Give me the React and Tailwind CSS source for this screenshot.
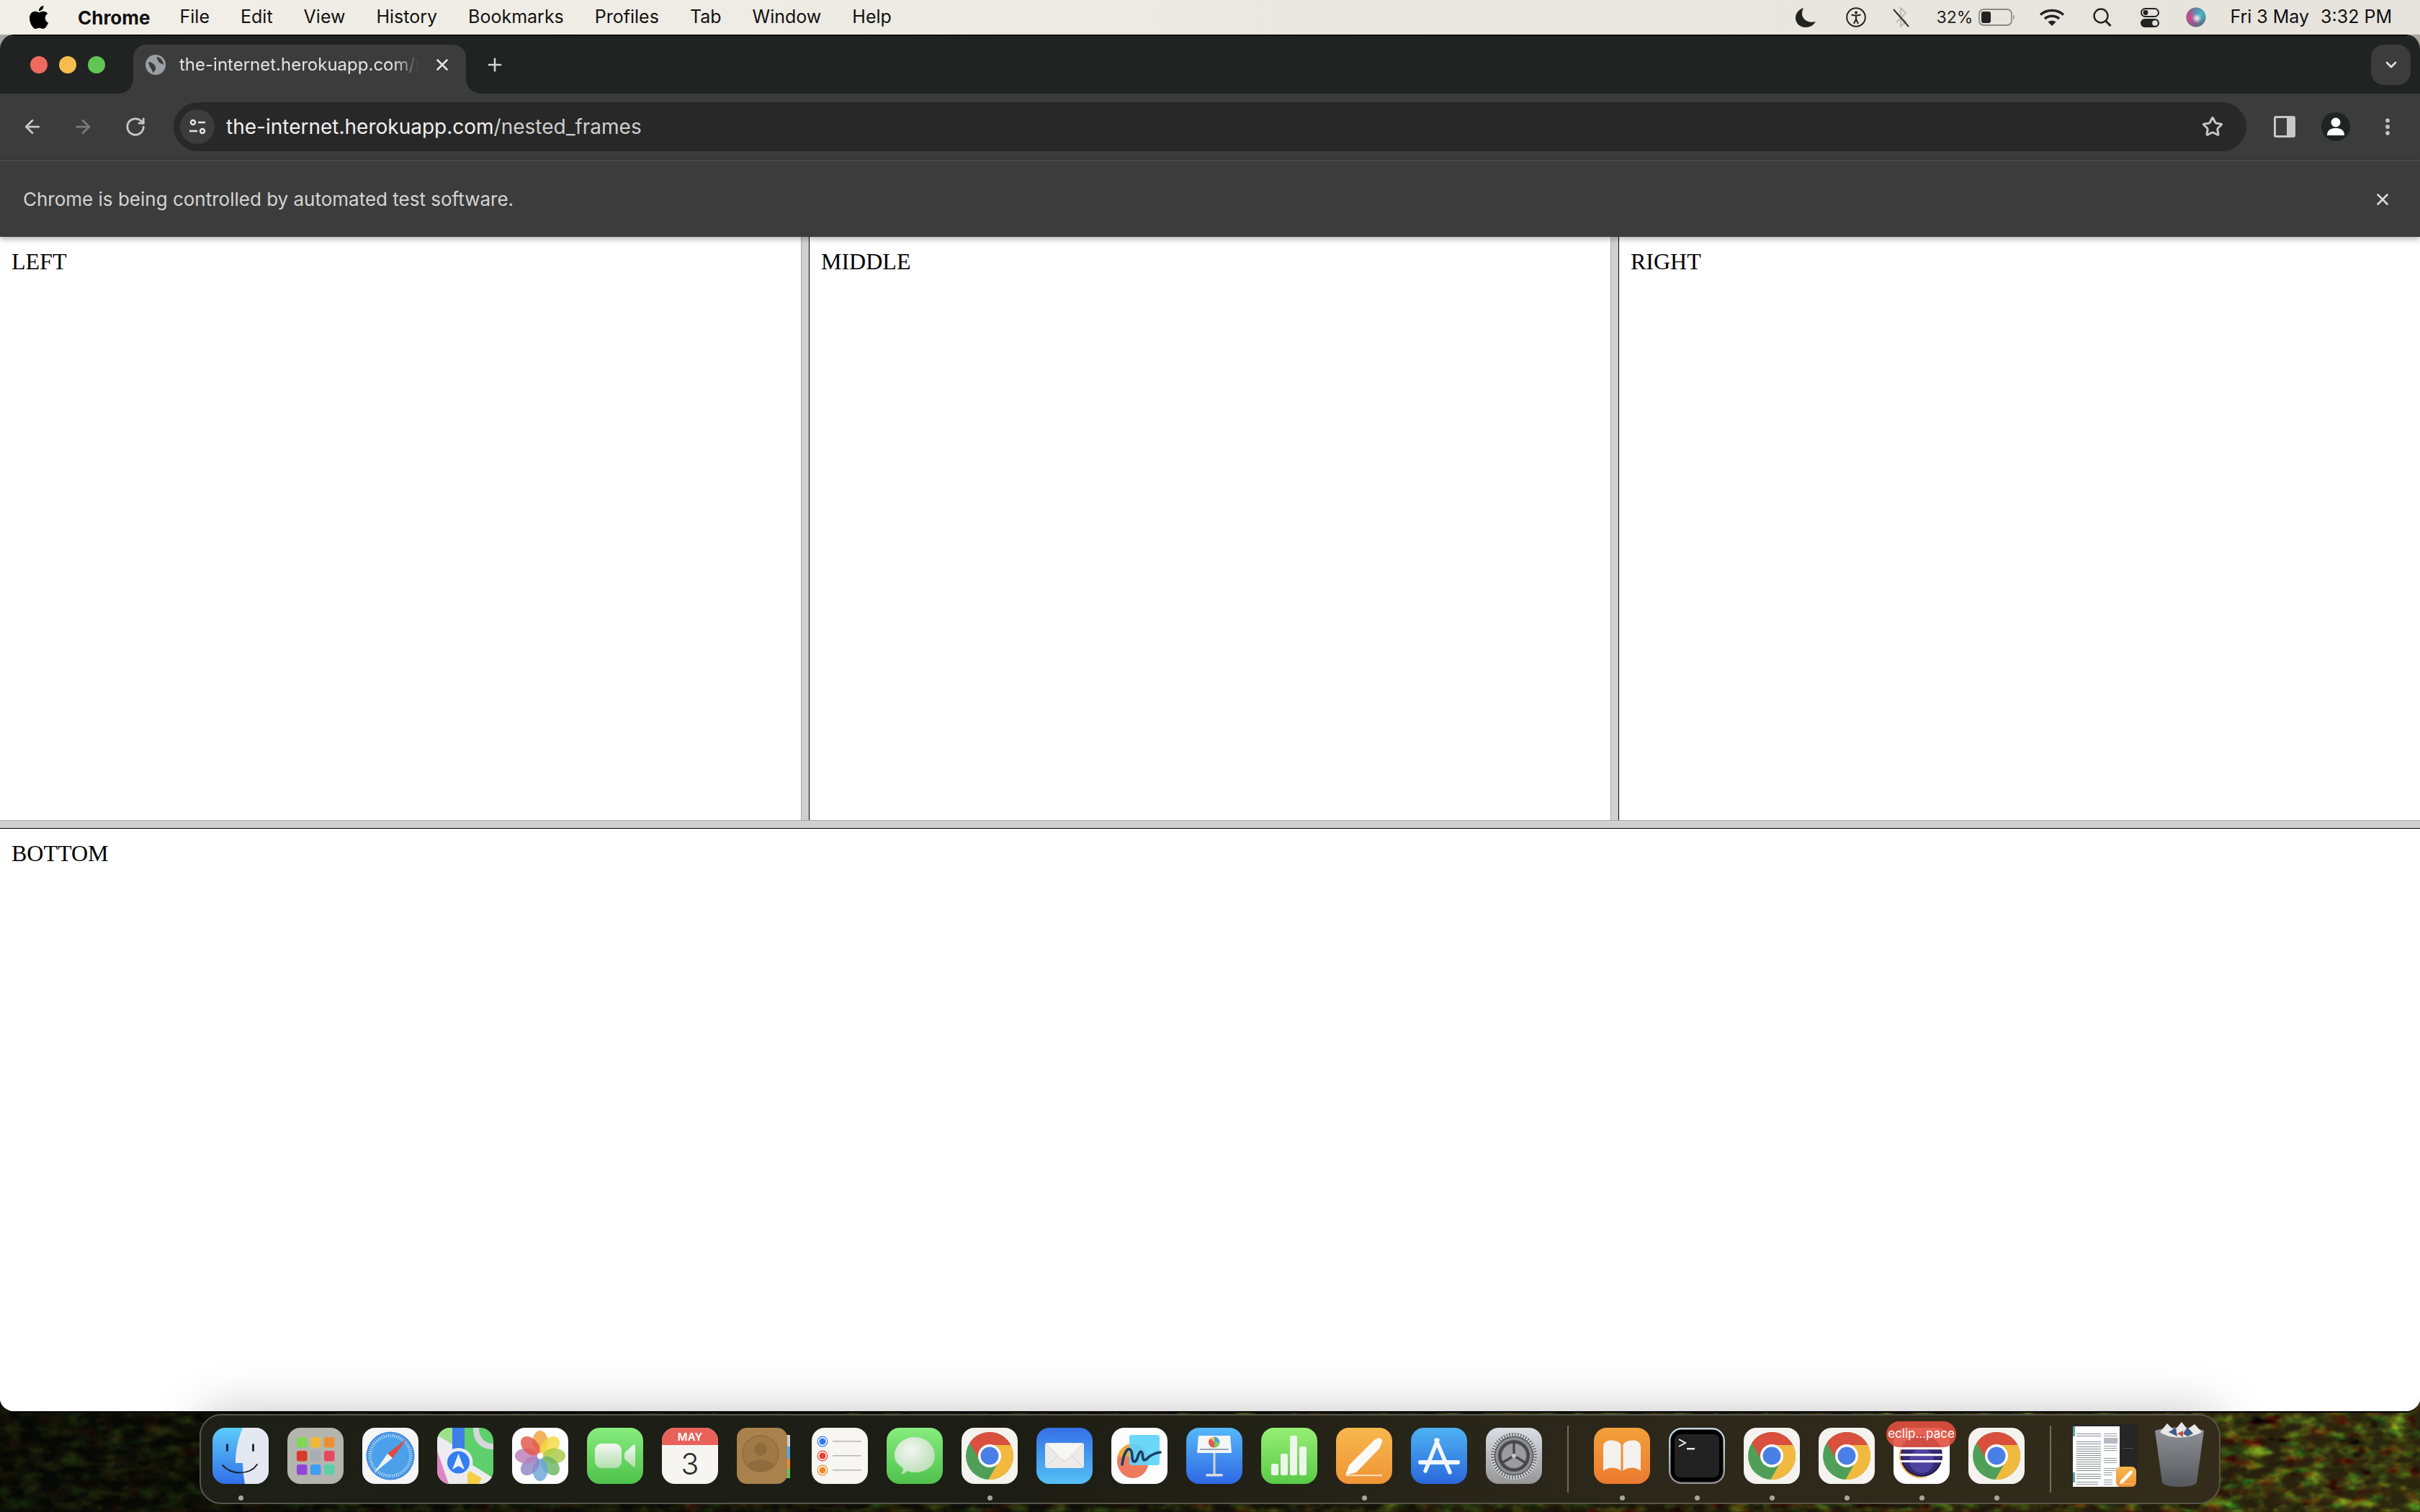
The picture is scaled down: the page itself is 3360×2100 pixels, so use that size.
import React from 'react';
import { ArrowLeft, ArrowRight, ChevronDown, EllipsisVertical, Plus, RotateCw, Star, X } from 'lucide-react';

const ui = 'font-["Inter","Liberation_Sans",sans-serif]';

function Tile({ children }) {
    return <svg viewBox="0 0 78 78" className="w-[78px] h-[78px] overflow-visible block">{children}</svg>;
}

function Chrome() {
    return (
        <Tile>
            <rect width="78" height="78" rx="18" fill="#f4f3ef" />
            <circle cx="39" cy="39" r="33" fill="#4f9f58" />
            <path d="M39 24L68.4 24A33 33 0 0 0 11.3 21L26 46.5Z" fill="#d9503f" />
            <path d="M52 46.5L37.3 72A33 33 0 0 0 68.4 24L39 24Z" fill="#f2b93f" />
            <circle cx="39" cy="39" r="16" fill="#fff" />
            <circle cx="39" cy="39" r="12.5" fill="#4a7fe5" />
        </Tile>
    );
}

function Finder() {
    return (
        <Tile>
            <defs>
                <linearGradient id="finderBlue" x1="0" y1="0" x2="0" y2="1"><stop offset="0" stopColor="#5ccbfb" /><stop offset="1" stopColor="#3170e8" /></linearGradient>
            </defs>
            <rect width="78" height="78" rx="18" fill="url(#finderBlue)" />
            <path d="M42 0H60A18 18 0 0 1 78 18V60A18 18 0 0 1 60 78H45C43 66 42 58 42 49H32C32 30 36 14 42 0Z" fill="#e3e8f1" />
            <rect x="19" y="22" width="3" height="11" rx="1.5" fill="#1f2a44" />
            <rect x="55" y="22" width="3" height="11" rx="1.5" fill="#1f2a44" />
            <path d="M14 52C26 66 52 66 62 51" fill="none" stroke="#1b2130" strokeWidth="2" strokeLinecap="round" />
        </Tile>
    );
}

function Launchpad() {
    const colors = ['#7fd858', '#f0b93c', '#ec8f32', '#d83a2c', '#a9aeb2', '#e8485f', '#8f45d6', '#3f9cf5', '#5fcfa8'];
    return (
        <Tile>
            <rect width="78" height="78" rx="18" fill="#b5b5af" />
            {colors.map((c, i) => (
                <rect key={c} x={13 + (i % 3) * 19} y={13 + Math.floor(i / 3) * 19} width="14.5" height="14.5" rx="3" fill={c} />
            ))}
        </Tile>
    );
}

function Safari() {
    const ticks = Array.from({ length: 60 }, (_, i) => i * 6);
    return (
        <Tile>
            <rect width="78" height="78" rx="18" fill="#f5f5f5" />
            <circle cx="39" cy="39" r="33.5" fill="#3f8fe0" />
            <circle cx="39" cy="39" r="29" fill="#4ba0ea" />
            {ticks.map((a) => (
                <rect key={a} x="38.6" y="8" width="0.9" height="5" fill="#dcecf9" transform={`rotate(${a} 39 39)`} />
            ))}
            <path d="M62 15L35 36L42 42Z" fill="#e2483a" />
            <path d="M16 63L35 36L42 42Z" fill="#f2f2f2" />
        </Tile>
    );
}

function Maps() {
    return (
        <Tile>
            <clipPath id="mapsClip"><rect width="78" height="78" rx="18" /></clipPath>
            <g clipPath="url(#mapsClip)">
                <rect width="78" height="78" fill="#5fce6c" />
                <path d="M0 0H22V24L0 10Z" fill="#9be28a" />
                <path d="M0 10L32 30V78H14L0 50Z" fill="#ececf0" />
                <path d="M0 50L14 78H0Z" fill="#df86c4" />
                <path d="M0 32L16 78H0Z" fill="#df86c4" />
                <path d="M40 46L78 70V78H28V40Z" fill="#ececf0" />
                <path d="M42 78V58L62 70L58 78Z" fill="#f4cf46" />
                <rect x="21" y="0" width="17" height="42" fill="#3d7ee9" />
                <path d="M50 0C50 20 60 30 78 30V22C66 22 58 14 58 0Z" fill="#d6d6da" />
                <circle cx="29.5" cy="48" r="20" fill="#e8ecf3" />
                <circle cx="29.5" cy="48" r="15.5" fill="#337df0" />
                <path d="M29.5 36L38 58L29.5 53L21 58Z" fill="#e9f0fb" />
            </g>
        </Tile>
    );
}

function Photos() {
    const petals = ['#f0a238', '#f4d93f', '#a8cb44', '#6bb667', '#6aa6dc', '#8f84c6', '#bb7db8', '#e2574c'];
    return (
        <Tile>
            <rect width="78" height="78" rx="18" fill="#fdfdfd" />
            {petals.map((c, i) => (
                <ellipse key={c} cx="39" cy="19.5" rx="10.5" ry="15.5" fill={c} fillOpacity="0.82" transform={`rotate(${i * 45} 39 39)`} />
            ))}
            <circle cx="39" cy="39" r="1.6" fill="#fff" />
        </Tile>
    );
}

function FaceTime() {
    return (
        <Tile>
            <defs>
                <linearGradient id="ftGreen" x1="0" y1="0" x2="0" y2="1"><stop offset="0" stopColor="#86ec7e" /><stop offset="1" stopColor="#4fc24c" /></linearGradient>
                <linearGradient id="ftWhite" x1="0" y1="0" x2="0" y2="1"><stop offset="0" stopColor="#f4f7f2" /><stop offset="1" stopColor="#b3dfae" /></linearGradient>
            </defs>
            <rect width="78" height="78" rx="18" fill="url(#ftGreen)" />
            <rect x="11" y="22" width="37" height="34" rx="9" fill="url(#ftWhite)" />
            <path d="M52 35L64 24C66 23 67 24 67 26V52C67 54 66 55 64 54L52 43Z" fill="url(#ftWhite)" />
        </Tile>
    );
}

function Calendar() {
    return (
        <Tile>
            <clipPath id="calClip"><rect width="78" height="78" rx="18" /></clipPath>
            <g clipPath="url(#calClip)">
                <rect width="78" height="78" fill="#f6f5f2" />
                <rect width="78" height="24" fill="#e8625a" />
            </g>
            <text x="39" y="18" textAnchor="middle" fontFamily="Inter, sans-serif" fontWeight="600" fontSize="15" fill="#fff">MAY</text>
            <text x="39" y="65" textAnchor="middle" fontFamily="Inter, sans-serif" fontWeight="300" fontSize="41" fill="#2b2b2b">3</text>
        </Tile>
    );
}

function Contacts() {
    return (
        <Tile>
            <rect x="66" y="10" width="8" height="16" fill="#cfcfcf" />
            <rect x="66" y="26" width="8" height="17" fill="#55a7e8" />
            <rect x="66" y="43" width="8" height="14" fill="#ec8a2e" />
            <rect x="66" y="57" width="8" height="13" fill="#62c158" />
            <rect x="0" width="70" height="78" rx="14" fill="#a9814c" />
            <circle cx="33" cy="36" r="25" fill="#a07a46" stroke="#8f6c3d" strokeWidth="1.5" />
            <circle cx="33" cy="30" r="9" fill="#8f6c3d" />
            <path d="M14 53C18 42 48 42 52 53C46 64 20 64 14 53Z" fill="#8f6c3d" />
        </Tile>
    );
}

function Reminders() {
    const rows = [['#3478f0', 19], ['#e8402f', 39], ['#ee8a26', 59]];
    return (
        <Tile>
            <rect width="78" height="78" rx="18" fill="#f7f6f3" />
            {rows.map(([c, y]) => (
                <g key={c}>
                    <circle cx="15" cy={y} r="6.8" fill="#fff" stroke={c} strokeWidth="1.2" />
                    <circle cx="15" cy={y} r="4.6" fill={c} />
                    <rect x="29" y={y - 1} width="40" height="1.6" fill="#b8b8b8" />
                </g>
            ))}
        </Tile>
    );
}

function Messages() {
    return (
        <Tile>
            <defs>
                <linearGradient id="msgGreen" x1="0" y1="0" x2="0" y2="1"><stop offset="0" stopColor="#86ec7e" /><stop offset="1" stopColor="#4fc24c" /></linearGradient>
                <radialGradient id="msgWhite" cx="0.4" cy="0.35" r="0.75"><stop offset="0" stopColor="#f3f6f1" /><stop offset="1" stopColor="#b4dcb0" /></radialGradient>
            </defs>
            <rect width="78" height="78" rx="18" fill="url(#msgGreen)" />
            <path d="M39 13C55 13 67 25 67 39C67 53 55 62 39 62C35 62 31 61 29 60C26 63 22 65 20 64C22 62 23 59 23 56C15 51 11 46 11 39C11 25 23 13 39 13Z" fill="url(#msgWhite)" />
        </Tile>
    );
}

function Mail() {
    return (
        <Tile>
            <defs>
                <linearGradient id="mailBlue" x1="0" y1="0" x2="0" y2="1"><stop offset="0" stopColor="#3470e6" /><stop offset="1" stopColor="#55c0f7" /></linearGradient>
            </defs>
            <rect width="78" height="78" rx="18" fill="url(#mailBlue)" />
            <rect x="12" y="21" width="54" height="35" rx="3" fill="#ecebea" />
            <path d="M13 22L35 44C37 46 41 46 43 44L65 22" fill="#f6f6f5" stroke="#cfcfcf" strokeWidth="1" />
            <path d="M13 55L30 38M65 55L48 38" stroke="#cfcfcf" strokeWidth="1" />
        </Tile>
    );
}

function Freeform() {
    return (
        <Tile>
            <rect width="78" height="78" rx="18" fill="#fdfdfd" />
            <ellipse cx="30" cy="46" rx="22" ry="24" fill="#ee7a5e" />
            <path d="M8 46C8 32 18 24 28 22V40H10Z" fill="#f0a83c" />
            <rect x="25" y="10" width="42" height="42" rx="3" fill="#60d4f8" fillOpacity="0.92" />
            <path d="M15 51C17 36 22 28 26 30C31 33 27 47 32 47C37 47 37 33 41 33C45 33 42 45 46 45C50 45 52 36 68 34" fill="none" stroke="#173e66" strokeWidth="3.6" strokeLinecap="round" />
        </Tile>
    );
}

function Keynote() {
    return (
        <Tile>
            <defs>
                <linearGradient id="keyBlue" x1="0" y1="0" x2="0" y2="1"><stop offset="0" stopColor="#55b8f7" /><stop offset="1" stopColor="#3068e6" /></linearGradient>
            </defs>
            <rect width="78" height="78" rx="18" fill="url(#keyBlue)" />
            <path d="M17 11H61L63 35H15Z" fill="#f4f5f6" />
            <rect x="19" y="29" width="40" height="2" fill="#9aa7b5" />
            <circle cx="39" cy="20" r="7.5" fill="#e9c23e" />
            <path d="M39 20V12.5A7.5 7.5 0 0 1 46.5 20Z" fill="#4aa5e0" />
            <path d="M39 20L46.5 20A7.5 7.5 0 0 1 39 27.5Z" fill="#82c76a" />
            <path d="M39 20V27.5A7.5 7.5 0 0 1 33 15Z" fill="#e2574c" />
            <rect x="37.5" y="35" width="3" height="29" fill="#cfd4d9" />
            <rect x="27" y="64" width="24" height="3.5" rx="1.7" fill="#d9dde0" />
        </Tile>
    );
}

function Numbers() {
    return (
        <Tile>
            <defs>
                <linearGradient id="numGreen" x1="0" y1="0" x2="0" y2="1"><stop offset="0" stopColor="#96ee74" /><stop offset="1" stopColor="#5acb48" /></linearGradient>
            </defs>
            <rect width="78" height="78" rx="18" fill="url(#numGreen)" />
            <rect x="14" y="50" width="10" height="16" rx="2.5" fill="#eef5ea" />
            <rect x="27" y="36" width="10" height="30" rx="2.5" fill="#eef5ea" />
            <rect x="40" y="11" width="10" height="55" rx="2.5" fill="#eef5ea" />
            <rect x="53" y="26" width="10" height="40" rx="2.5" fill="#eef5ea" />
        </Tile>
    );
}

function Pages({ id = 'pagesOrange' }) {
    return (
        <>
            <defs>
                <linearGradient id={id} x1="0" y1="0" x2="0" y2="1"><stop offset="0" stopColor="#f6b84c" /><stop offset="1" stopColor="#f09436" /></linearGradient>
            </defs>
            <rect width="78" height="78" rx="18" fill={`url(#${id})`} />
            <path d="M62 15C66 17 63 24 59 30L28 62L13 66L18 52L50 20C54 16 59 13 62 15Z" fill="#fbfaf7" />
            <rect x="14" y="65" width="50" height="2.2" fill="#fbdcae" />
        </>
    );
}

function PagesIcon() {
    return <Tile><Pages /></Tile>;
}

function AppStore() {
    return (
        <Tile>
            <defs>
                <linearGradient id="asBlue" x1="0" y1="0" x2="0" y2="1"><stop offset="0" stopColor="#4eb1f3" /><stop offset="1" stopColor="#2a68dc" /></linearGradient>
            </defs>
            <rect width="78" height="78" rx="18" fill="url(#asBlue)" />
            <g stroke="#f1f6fc" strokeLinecap="round" fill="none">
                <path d="M37 17L20 60" strokeWidth="5.5" />
                <path d="M35 17L54 62" strokeWidth="5.5" />
                <path d="M13 48H65" strokeWidth="6" />
            </g>
        </Tile>
    );
}

function Settings() {
    const teeth = Array.from({ length: 48 }, (_, i) => i * 7.5);
    return (
        <Tile>
            <defs>
                <linearGradient id="setGray" x1="0" y1="0" x2="0" y2="1"><stop offset="0" stopColor="#d8dfe5" /><stop offset="1" stopColor="#969696" /></linearGradient>
            </defs>
            <rect width="78" height="78" rx="18" fill="url(#setGray)" />
            <circle cx="39" cy="39" r="32" fill="#3f3f41" />
            {teeth.map((a) => (
                <rect key={a} x="37.6" y="6" width="2.8" height="6" fill="#c8cdd1" transform={`rotate(${a} 39 39)`} />
            ))}
            <circle cx="39" cy="39" r="26" fill="#8f8f91" />
            <circle cx="39" cy="39" r="22" fill="#5c5c5e" />
            <circle cx="39" cy="39" r="17" fill="#9c9c9e" />
            <g stroke="#47474a" strokeWidth="3.2" fill="none">
                <circle cx="39" cy="39" r="20" />
                <path d="M39 39V19M39 39L22 49M39 39L56 49" />
            </g>
            <circle cx="39" cy="39" r="3" fill="#c9c9cb" />
        </Tile>
    );
}

function Books() {
    return (
        <Tile>
            <defs>
                <linearGradient id="bookOrange" x1="0" y1="0" x2="0" y2="1"><stop offset="0" stopColor="#f2a03a" /><stop offset="1" stopColor="#ec7a30" /></linearGradient>
            </defs>
            <rect width="78" height="78" rx="18" fill="url(#bookOrange)" />
            <path d="M37.5 24C36 19 29 17.5 23 17.5C17 17.5 13 21 13 27V60C19 54 32 54 37.5 60Z" fill="#f5f2ee" />
            <path d="M40.5 24C42 19 49 17.5 55 17.5C61 17.5 65 21 65 27V60C59 54 46 54 40.5 60Z" fill="#f5f2ee" />
        </Tile>
    );
}

function Terminal() {
    return (
        <Tile>
            <defs>
                <linearGradient id="termEdge" x1="0" y1="0" x2="0" y2="1"><stop offset="0" stopColor="#c9dce6" /><stop offset="1" stopColor="#8e8e8e" /></linearGradient>
            </defs>
            <rect width="78" height="78" rx="18" fill="url(#termEdge)" />
            <rect x="2.5" y="2.5" width="73" height="73" rx="15" fill="#000" />
            <rect x="8" y="9" width="62" height="60" rx="8" fill="#222" />
            <path d="M14 16L23 21L14 26" fill="none" stroke="#f2f2f2" strokeWidth="2" />
            <rect x="25" y="28" width="11" height="2.4" fill="#f2f2f2" />
        </Tile>
    );
}

function Eclipse() {
    return (
        <Tile>
            <rect width="78" height="78" rx="18" fill="#fdfdfd" />
            <circle cx="39" cy="39" r="31" fill="#ef9f3d" />
            <circle cx="42" cy="38" r="31" fill="#fdfdfd" />
            <circle cx="39" cy="39" r="29" fill="#16102c" />
            <circle cx="39" cy="39" r="27.5" fill="#342a72" />
            <circle cx="39" cy="46" r="17" fill="#4f43a0" />
            <rect x="9" y="27" width="60" height="3.2" fill="#f4f3f8" />
            <rect x="9" y="36" width="60" height="3.2" fill="#f4f3f8" />
            <rect x="9" y="45" width="60" height="3.2" fill="#f4f3f8" />
        </Tile>
    );
}

function DocThumb() {
    const left = [8, 11, 19, 22, 26, 29, 32, 35, 38, 41, 44, 47, 50, 53, 56, 59, 64, 67, 70, 75, 78];
    const right = [8, 11, 25, 28, 31, 42, 45, 48, 56, 59, 62, 65, 72, 75, 78];
    return (
        <Tile>
            <rect x="-5" y="-5" width="90" height="87" fill="#262626" />
            <rect x="-5" y="-2" width="65" height="84" fill="#fdfdfd" />
            <rect x="-5" y="-2" width="3" height="14" fill="#5aa6a6" />
            <rect x="-5" y="62" width="3" height="14" fill="#5aa6a6" />
            {left.map((y) => <rect key={y} x="0" y={y} width={y % 3 === 0 ? 30 : 34} height="1" fill="#8a8f96" />)}
            {right.map((y) => <rect key={y} x="38" y={y} width={y > 60 ? 12 : 18} height="1" fill="#9a9ea5" />)}
            <rect x="38" y="14" width="19" height="8" fill="#b6bac4" />
            <rect x="65" y="28" width="14" height="1" fill="#555" />
            <g transform="translate(55 54) scale(0.36)"><Pages id="pagesMini" /></g>
        </Tile>
    );
}

function Trash() {
    return (
        <Tile>
            <defs>
                <linearGradient id="trashGray" x1="0" y1="0" x2="0" y2="1"><stop offset="0" stopColor="#8f9296" /><stop offset="0.6" stopColor="#6d7074" /><stop offset="1" stopColor="#55585b" /></linearGradient>
            </defs>
            <path d="M5 4C22 -2 56 -2 73 4L63 76C60 84 18 84 15 76Z" fill="url(#trashGray)" />
            <path d="M12 6L22 -6L32 4L42 -8L50 2L60 -5L70 6C52 16 26 16 12 6Z" fill="#e8e8e6" />
            <path d="M24 6L34 0L36 12ZM44 8L50 -1L58 8L50 12Z" fill="#3d5d88" />
            <path d="M36 8L44 4L44 13Z" fill="#c9503f" />
        </Tile>
    );
}

function Moon() {
    return <svg viewBox="0 0 28 28" className="w-[28px] h-[28px]"><path d="M11 1C4 3 0 9 0 15C0 22 6 28 14 28C20 28 25 25 28 20C18 23 9 17 9 9C9 6 10 3 11 1Z" fill="#222" /></svg>;
}

function Accessibility() {
    return (
        <svg viewBox="0 0 28 28" className="w-[28px] h-[28px]" fill="none" stroke="#222">
            <circle cx="14" cy="14" r="12.8" strokeWidth="2" />
            <circle cx="14" cy="7.5" r="2" fill="#222" stroke="none" />
            <path d="M7.5 10.5Q14 12.5 20.5 10.5M14 12V16.5M14 16.5L11 23M14 16.5L17 23" strokeWidth="2" />
        </svg>
    );
}

function BluetoothOff() {
    return (
        <svg viewBox="0 0 24 28" className="w-[24px] h-[28px]" fill="none">
            <path d="M5 7L18 20L11 27V1L18 8L5 21" stroke="#bdbcb6" strokeWidth="2" />
            <path d="M1 3L22 27" stroke="#333" strokeWidth="2" />
        </svg>
    );
}

function Battery() {
    return (
        <svg viewBox="0 0 51 24" className="w-[51px] h-[24px]">
            <rect x="1" y="1" width="45" height="22" rx="6" fill="none" stroke="#8b8a85" strokeWidth="1.8" />
            <rect x="4" y="4" width="13" height="16" rx="3" fill="#222" />
            <path d="M48.5 8.5C50.5 9.5 50.5 14.5 48.5 15.5Z" fill="#8b8a85" />
        </svg>
    );
}

function Wifi() {
    return (
        <svg viewBox="0 0 36 26" className="w-[36px] h-[26px]" fill="none" stroke="#222" strokeWidth="3.6">
            <path d="M2 9.5C11 1.5 25 1.5 34 9.5" />
            <path d="M8 15C14 10 22 10 28 15" />
            <path d="M18 25L12.5 19.5C15.5 17 20.5 17 23.5 19.5Z" fill="#222" stroke="none" />
        </svg>
    );
}

function Search() {
    return (
        <svg viewBox="0 0 26 26" className="w-[26px] h-[26px]" fill="none" stroke="#222" strokeWidth="2.4">
            <circle cx="11" cy="11" r="9.5" />
            <path d="M17.5 18L24.5 25" strokeWidth="3" />
        </svg>
    );
}

function ControlCenter() {
    return (
        <svg viewBox="0 0 26 27" className="w-[26px] h-[27px]">
            <rect x="1" y="1" width="24" height="11" rx="5.5" fill="none" stroke="#222" strokeWidth="2" />
            <circle cx="7" cy="6.5" r="3.4" fill="#222" />
            <rect y="15" width="26" height="12" rx="6" fill="#222" />
            <circle cx="20" cy="21" r="3.8" fill="#e6e3dc" />
        </svg>
    );
}

function Siri() {
    return (
        <svg viewBox="0 0 28 28" className="w-[28px] h-[28px]">
            <defs>
                <radialGradient id="siriA" cx="0.25" cy="0.5" r="0.6"><stop offset="0" stopColor="#e0438f" /><stop offset="1" stopColor="#e0438f" stopOpacity="0" /></radialGradient>
                <radialGradient id="siriB" cx="0.75" cy="0.3" r="0.6"><stop offset="0" stopColor="#43b7c9" /><stop offset="1" stopColor="#43b7c9" stopOpacity="0" /></radialGradient>
                <radialGradient id="siriC" cx="0.55" cy="0.55" r="0.25"><stop offset="0" stopColor="#eef3f6" /><stop offset="1" stopColor="#eef3f6" stopOpacity="0" /></radialGradient>
            </defs>
            <circle cx="14" cy="14" r="13.5" fill="#5c6c84" />
            <circle cx="14" cy="14" r="13.5" fill="url(#siriA)" />
            <circle cx="14" cy="14" r="13.5" fill="url(#siriB)" />
            <circle cx="14" cy="14" r="13.5" fill="url(#siriC)" />
        </svg>
    );
}

function GlobeFavicon() {
    return (
        <svg viewBox="0 0 28 28" className="w-[28px] h-[28px] shrink-0">
            <circle cx="14" cy="14" r="14" fill="#9aa0a6" />
            <path d="M16 3C20 3 25 8 25 14C22 12 19 12 18 9C17 7 15 5 16 3ZM4 10C8 10 13 13 14 17C15 21 12 24 10 25C10 20 5 18 4 10Z" fill="#3c3c3c" />
        </svg>
    );
}

function SiteInfo() {
    return (
        <svg viewBox="0 0 24 24" className="w-[24px] h-[24px]" fill="none" stroke="#e3e3e3" strokeWidth="2.4">
            <circle cx="6" cy="6" r="3" />
            <path d="M13 6H23M1 18H12" />
            <circle cx="19" cy="18" r="3" />
        </svg>
    );
}

function SidePanel() {
    return (
        <svg viewBox="0 0 30 30" className="w-[30px] h-[30px]">
            <rect width="30" height="30" rx="3" fill="#c7c7c7" />
            <rect x="3" y="3" width="15" height="24" fill="#3c3c3c" />
        </svg>
    );
}

function Profile() {
    return (
        <svg viewBox="0 0 40 40" className="w-[40px] h-[40px]">
            <circle cx="20" cy="20" r="20" fill="#202322" />
            <circle cx="20" cy="14" r="6.5" fill="#fff" />
            <path d="M8 32C8 24 14 22 20 22C26 22 32 24 32 32Z" fill="#fff" />
        </svg>
    );
}

function Wallpaper() {
    return (
        <svg className="absolute left-0 bottom-0 w-[3360px] h-[162px]" viewBox="0 0 3360 162" preserveAspectRatio="none">
            <defs>
                <linearGradient id="wallBase" x1="0" y1="0" x2="1" y2="0">
                    <stop offset="0" stopColor="#060805" />
                    <stop offset="0.5" stopColor="#14130a" />
                    <stop offset="0.92" stopColor="#2a200e" />
                    <stop offset="1" stopColor="#2a260f" />
                </linearGradient>
                <linearGradient id="wallFade" x1="0" y1="0" x2="1" y2="0">
                    <stop offset="0" stopColor="#fff" stopOpacity="0.22" />
                    <stop offset="0.5" stopColor="#fff" stopOpacity="0.5" />
                    <stop offset="0.92" stopColor="#fff" stopOpacity="1" />
                </linearGradient>
                <mask id="wallMask"><rect width="3360" height="162" fill="url(#wallFade)" /></mask>
                <filter id="foliage" x="0" y="0" width="100%" height="100%" colorInterpolationFilters="sRGB">
                    <feTurbulence type="fractalNoise" baseFrequency="0.035 0.07" numOctaves="4" seed="7" />
                    <feColorMatrix type="matrix" values="0.7 0.3 0 0 -0.2  0.2 1.1 0 0 -0.33  0 0.2 0 0 -0.03  0 0 0 3 -1" />
                    <feGaussianBlur stdDeviation="0.8" />
                </filter>
            </defs>
            <rect width="3360" height="162" fill="url(#wallBase)" />
            <rect width="3360" height="162" filter="url(#foliage)" mask="url(#wallMask)" />
        </svg>
    );
}

const dockGroups = [
    [
        [Finder, true], [Launchpad], [Safari], [Maps], [Photos], [FaceTime], [Calendar], [Contacts], [Reminders],
        [Messages], [Chrome, true], [Mail], [Freeform], [Keynote], [Numbers], [PagesIcon, true], [AppStore], [Settings],
    ],
    [[Books, true], [Terminal, true], [Chrome, true], [Chrome, true], [Eclipse, true], [Chrome, true]],
    [[DocThumb], [Trash]],
];

function DockItem({ icon: Icon, running }) {
    return (
        <div className="relative flex flex-col items-center gap-[16px] w-[78px]">
            <Icon />
            <span className={`w-[7px] h-[7px] rounded-full ${running ? 'bg-[#a5a699]' : 'bg-transparent'}`}></span>
            {Icon === Eclipse && (
                <span className={`absolute -left-[10px] -top-[9px] w-[97px] h-[36px] rounded-[18px] bg-[#e2503f]/90 flex items-center justify-center text-white text-[17px] ${ui}`}>eclip...pace</span>
            )}
        </div>
    );
}

function Dock() {
    return (
        <div className="relative z-20 h-[125px] flex px-[16px] pt-[17px] rounded-[30px] border-2 border-[#55554a] bg-[linear-gradient(90deg,#1e1f16,#1c1d14_40%,#2a261a_65%,#332c1a)] shadow-[0_0_70px_rgba(0,0,0,0.26)]">
            {dockGroups.map((group, g) => (
                <React.Fragment key={g}>
                    {g > 0 && <div className="w-[2px] h-[93px] -mt-[3px] mx-[35px] bg-[#6f6b5c] shrink-0"></div>}
                    <div className="flex gap-[26px]">
                        {group.map(([icon, running], i) => <DockItem key={i} icon={icon} running={running} />)}
                    </div>
                </React.Fragment>
            ))}
        </div>
    );
}

function MenuBar() {
    const items = ['Edit', 'View', 'History', 'Bookmarks', 'Profiles', 'Tab', 'Window', 'Help'];
    return (
        <div className={`h-[48px] shrink-0 flex items-center bg-[linear-gradient(90deg,#f2efe8,#e6e3dc)] text-[#111] text-[25px] ${ui}`}>
            <svg viewBox="0 0 24 24" className="w-[32px] h-[32px] ml-[38px]" fill="#000">
                <path d="M12.152 6.896c-.948 0-2.415-1.078-3.96-1.04-2.04.027-3.91 1.183-4.961 3.014-2.117 3.675-.546 9.103 1.519 12.09 1.013 1.454 2.208 3.09 3.792 3.039 1.52-.065 2.09-.987 3.935-.987 1.831 0 2.35.987 3.96.948 1.637-.026 2.676-1.48 3.676-2.948 1.156-1.688 1.636-3.325 1.662-3.415-.039-.013-3.182-1.221-3.22-4.857-.026-3.04 2.48-4.494 2.597-4.559-1.429-2.09-3.623-2.324-4.39-2.376-2-.156-3.675 1.09-4.61 1.09zM15.53 3.83c.843-1.012 1.4-2.427 1.245-3.83-1.207.052-2.662.805-3.532 1.818-.78.896-1.454 2.338-1.273 3.714 1.338.104 2.715-.688 3.559-1.701" />
            </svg>
            <span className="ml-[38px] font-bold text-[26px]">Chrome</span>
            <span className="ml-[41px]">File</span>
            {items.map((label) => <span key={label} className="ml-[43px]">{label}</span>)}
            <div className="ml-auto pr-[39px] flex items-center">
                <Moon />
                <span className="ml-[42px]"><Accessibility /></span>
                <span className="ml-[37px]"><BluetoothOff /></span>
                <span className="ml-[37px] text-[23px] text-[#222]">32%</span>
                <span className="ml-[8px]"><Battery /></span>
                <span className="ml-[33px]"><Wifi /></span>
                <span className="ml-[39px]"><Search /></span>
                <span className="ml-[40px]"><ControlCenter /></span>
                <span className="ml-[37px]"><Siri /></span>
                <span className="ml-[33px]">Fri 3 May</span>
                <span className="ml-[16px]">3:32 PM</span>
            </div>
        </div>
    );
}

function TabStrip() {
    return (
        <div className="h-[80px] shrink-0 flex items-end bg-[#202322]">
            <div className="flex gap-[16px] ml-[42px] mb-[28px]">
                <span className="w-[24px] h-[24px] rounded-full bg-[#ee6a5f]"></span>
                <span className="w-[24px] h-[24px] rounded-full bg-[#f5bd4f]"></span>
                <span className="w-[24px] h-[24px] rounded-full bg-[#61c554]"></span>
            </div>
            <div className="relative ml-[39px] w-[462px] h-[68px] pl-[17px] pb-[12px] flex items-center rounded-t-[18px] bg-[#3c3c3c] text-[#e3e3e3] text-[24px]">
                <span className="absolute -left-[20px] bottom-0 w-[20px] h-[20px] bg-[radial-gradient(circle_at_0_0,transparent_19.5px,#3c3c3c_20px)]"></span>
                <span className="absolute -right-[20px] bottom-0 w-[20px] h-[20px] bg-[radial-gradient(circle_at_100%_0,transparent_19.5px,#3c3c3c_20px)]"></span>
                <GlobeFavicon />
                <span className="ml-[19px] w-[332px] overflow-hidden whitespace-nowrap [mask-image:linear-gradient(90deg,#000_90%,transparent)]">the-internet.herokuapp.com/nested_frames</span>
                <X className="ml-[20px] w-[26px] h-[26px] shrink-0" strokeWidth={2.4} />
            </div>
            <Plus className="ml-[26px] mb-[26px] w-[28px] h-[28px] text-[#d5d5d5]" strokeWidth={2.2} />
            <div className="ml-auto mr-[13px] mb-[12px] w-[55px] h-[56px] rounded-[18px] bg-[#3c3c3c] flex items-center justify-center">
                <ChevronDown className="w-[24px] h-[24px] text-[#e3e3e3]" strokeWidth={2.6} />
            </div>
        </div>
    );
}

function Toolbar() {
    return (
        <div className="h-[92px] shrink-0 flex items-center pl-[30px] pr-[30px] bg-[#3c3c3c]">
            <ArrowLeft className="w-[30px] h-[30px] text-[#c7c7c7]" strokeWidth={2.2} />
            <ArrowRight className="ml-[40px] w-[30px] h-[30px] text-[#7b7b7b]" strokeWidth={2.2} />
            <RotateCw className="ml-[43px] w-[30px] h-[30px] text-[#c7c7c7]" strokeWidth={2.2} />
            <div className="ml-[38px] flex-1 h-[68px] pl-[9px] pr-[32px] flex items-center rounded-full bg-[#282828]">
                <div className="w-[48px] h-[48px] rounded-full bg-[#3c3c3c] flex items-center justify-center"><SiteInfo /></div>
                <span className="ml-[16px] text-[28px] text-[#f0f0f0]">the-internet.herokuapp.com<span className="text-[#cfcfcf]">/nested_frames</span></span>
                <Star className="ml-auto w-[30px] h-[30px] text-[#c7c7c7]" strokeWidth={2.4} />
            </div>
            <div className="ml-[38px]"><SidePanel /></div>
            <div className="ml-[36px]"><Profile /></div>
            <EllipsisVertical className="ml-[37px] w-[30px] h-[30px] text-[#c7c7c7]" strokeWidth={2.6} />
        </div>
    );
}

function InfoBar() {
    return (
        <div className="relative z-10 h-[107px] shrink-0 flex items-center pl-[32px] pr-[39px] bg-[#3c3c3c] border-t-2 border-[#474747] text-[#d4d4d4] text-[26px] shadow-[0_3px_8px_rgba(0,0,0,0.3)]">
            <span>Chrome is being controlled by automated test software.</span>
            <X className="ml-auto w-[26px] h-[26px] text-[#dcdcdc]" strokeWidth={2.4} />
        </div>
    );
}

function Frame({ label, className }) {
    return <div className={`bg-white pt-[16px] pl-[16px] text-[32px] leading-[37px] text-black font-['Liberation_Serif',serif] ${className}`}>{label}</div>;
}

function VSplit() {
    return <div className="w-[12px] shrink-0 bg-[#d0d0d0] border-l border-[#a9a9a9] border-r border-r-black"></div>;
}

export default function App() {
    return (
        <div className="relative w-[3360px] h-[2100px] overflow-hidden flex flex-col bg-[#a8a69f]">
            <MenuBar />
            <div className={`relative z-10 h-[1914px] shrink-0 flex flex-col overflow-hidden rounded-[20px] border-y-2 border-black bg-white ${ui}`}>
                <TabStrip />
                <Toolbar />
                <InfoBar />
                <div className="h-[810px] shrink-0 flex">
                    <Frame label="LEFT" className="flex-1" />
                    <VSplit />
                    <Frame label="MIDDLE" className="flex-1" />
                    <VSplit />
                    <Frame label="RIGHT" className="flex-1" />
                </div>
                <div className="h-[12px] shrink-0 bg-[#d0d0d0] border-t border-[#a9a9a9] border-b border-b-black"></div>
                <Frame label="BOTTOM" className="flex-1" />
            </div>
            <div className="relative h-[162px] -mt-[24px] shrink-0 flex justify-center pt-[26px]">
                <Wallpaper />
                <Dock />
            </div>
        </div>
    );
}
